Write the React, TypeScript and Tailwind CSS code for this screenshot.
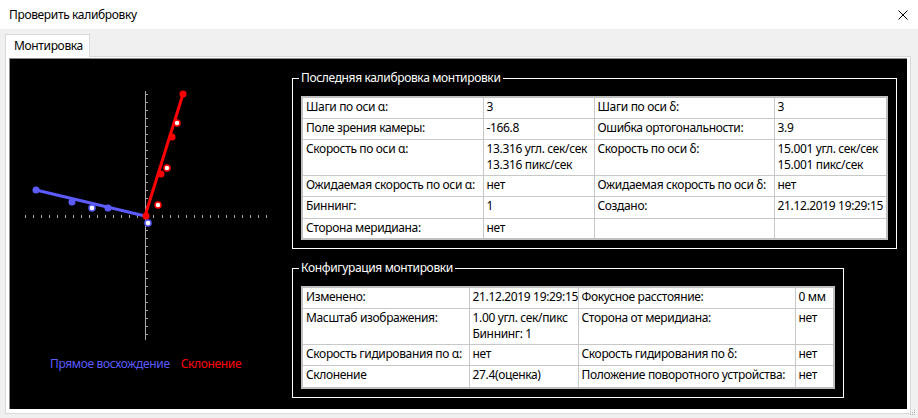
import React from "react"

const calib = [
  { h: "h-[21px]", a: "Шаги по оси α:", av: ["3"], b: "Шаги по оси δ:", bv: ["3"] },
  { h: "h-[21px]", a: "Поле зрения камеры:", av: ["-166.8"], b: "Ошибка ортогональности:", bv: ["3.9"] },
  {
    h: "h-[36px]",
    a: "Скорость по оси α:",
    av: ["13.316 угл. сек/сек", "13.316 пикс/сек"],
    b: "Скорость по оси δ:",
    bv: ["15.001 угл. сек/сек", "15.001 пикс/сек"],
  },
  { h: "h-[21px]", a: "Ожидаемая скорость по оси α:", av: ["нет"], b: "Ожидаемая скорость по оси δ:", bv: ["нет"] },
  { h: "h-[22px]", a: "Биннинг:", av: ["1"], b: "Создано:", bv: ["21.12.2019 19:29:15"] },
  { h: "h-[21px]", a: "Сторона меридиана:", av: ["нет"], b: "", bv: [""] },
]

const config = [
  { h: "h-[21px]", a: "Изменено:", av: ["21.12.2019 19:29:15"], b: "Фокусное расстояние:", bv: ["0 мм"] },
  {
    h: "h-[36px]",
    a: "Масштаб изображения:",
    av: ["1.00 угл. сек/пикс", "Биннинг: 1"],
    b: "Сторона от меридиана:",
    bv: ["нет"],
  },
  { h: "h-[21px]", a: "Скорость гидирования по α:", av: ["нет"], b: "Скорость гидирования по δ:", bv: ["нет"] },
  { h: "h-[23px]", a: "Склонение", av: ["27.4(оценка)"], b: "Положение поворотного устройства:", bv: ["нет"] },
]

type Row = { h: string; a: string; av: string[]; b: string; bv: string[] }

function Cell({ lines }: { lines: string[] }) {
  return (
    <td className="border border-[#c8c8c8] align-top px-[3px] pt-[1px] leading-[16px] whitespace-nowrap overflow-hidden">
      {lines.map((l, i) => (
        <div key={i}>{l}</div>
      ))}
    </td>
  )
}

function InfoTable({ rows, cols, width }: { rows: Row[]; cols: string[]; width: string }) {
  return (
    <table className={`table-fixed border-collapse border-2 border-[#c0c0c0] bg-white text-black ${width}`}>
      <colgroup>
        {cols.map((c, i) => (
          <col key={i} className={c} />
        ))}
      </colgroup>
      <tbody>
        {rows.map((r, i) => (
          <tr key={i} className={r.h}>
            <Cell lines={[r.a]} />
            <Cell lines={r.av} />
            <Cell lines={[r.b]} />
            <Cell lines={r.bv} />
          </tr>
        ))}
      </tbody>
    </table>
  )
}

function Chart() {
  const vTicks = Array.from({ length: 31 }, (_, i) => 94 + i * 8)
  const hTicks = Array.from({ length: 31 }, (_, i) => 25 + i * 8.03)
  const blue = "#5b5bff"
  const red = "#ff0000"
  return (
    <svg width="282" height="297" viewBox="10 59 282 297" className="block">
      <line x1="145.5" y1="91" x2="145.5" y2="340" stroke="#a8a8a8" strokeWidth="1" />
      {vTicks.map((y) => (
        <line key={y} x1="146" y1={y + 0.5} x2="148" y2={y + 0.5} stroke="#a8a8a8" strokeWidth="1" />
      ))}
      {hTicks.map((x) => (
        <line key={x} x1={Math.round(x) + 0.5} y1="215" x2={Math.round(x) + 0.5} y2="218" stroke="#a8a8a8" strokeWidth="1" />
      ))}

      <line x1="36" y1="190" x2="145" y2="216" stroke={blue} strokeWidth="3" />
      {[
        [36, 190],
        [72, 202],
        [108, 208],
      ].map(([x, y]) => (
        <circle key={x} cx={x} cy={y} r="3.5" fill={blue} />
      ))}
      {[
        [92, 208],
        [148, 223],
      ].map(([x, y]) => (
        <circle key={x} cx={x} cy={y} r="3" fill="#fff" stroke={blue} strokeWidth="1.5" />
      ))}

      <line x1="145" y1="216" x2="183" y2="94" stroke={red} strokeWidth="3" />
      {[
        [183, 94],
        [172, 137],
        [161, 174],
        [146, 216],
      ].map(([x, y]) => (
        <circle key={x} cx={x} cy={y} r="3.5" fill={red} />
      ))}
      {[
        [177, 123],
        [167, 168],
        [158, 205],
      ].map(([x, y]) => (
        <circle key={x} cx={x} cy={y} r="3" fill="#fff" stroke={red} strokeWidth="1.5" />
      ))}
    </svg>
  )
}

export default function App() {
  return (
    <div className="w-[918px] h-[418px] bg-[#f0f0f0] flex flex-col font-['Noto_Sans',sans-serif] text-[12px] tracking-[-0.35px] overflow-hidden">
      <div className="h-[29px] shrink-0 bg-white flex items-center justify-between pl-[9px] pr-[10px] text-black">
        <span>Проверить калибровку</span>
        <svg width="10" height="10" viewBox="0 0 10 10">
          <path d="M0.5 0.5 L9.5 9.5 M9.5 0.5 L0.5 9.5" stroke="#000" strokeWidth="1" />
        </svg>
      </div>

      <div className="flex flex-col pl-[5px] pt-[5px]">
        <div className="flex">
          <div className="relative z-10 h-[23px] w-[85px] -mb-px bg-white border border-b-0 border-[#d9d9d9] pl-[8px] flex items-center text-black">
            Монтировка
          </div>
        </div>
        <div className="w-[906px] h-[358px] bg-white border border-[#d9d9d9] pl-[3px] pr-[3px] pt-[1px] pb-[4px]">
          <div className="h-full bg-black border-l border-t border-[#8a8a8a] flex">
            <div className="w-[282px] shrink-0 flex flex-col">
              <Chart />
              <div className="flex pl-[40px] gap-[11px] leading-[16px]">
                <span className="text-[#5b5bff]">Прямое восхождение</span>
                <span className="text-[#ff0000]">Склонение</span>
              </div>
            </div>

            <div className="flex flex-col">
              <fieldset className="mt-[11px] w-[605px] border border-white pl-[8px] pt-[10px] pb-[8px]">
                <legend className="text-white leading-[16px] px-[2px] -ml-[2px]">Последняя калибровка монтировки</legend>
                <InfoTable
                  rows={calib}
                  width="w-[585px]"
                  cols={["w-[181px]", "w-[111px]", "w-[180px]", "w-[113px]"]}
                />
              </fieldset>
              <fieldset className="mt-[11px] w-[552px] border border-white pl-[8px] pt-[10px] pb-[8px]">
                <legend className="text-white leading-[16px] px-[2px] -ml-[2px]">Конфигурация монтировки</legend>
                <InfoTable
                  rows={config}
                  width="w-[532px]"
                  cols={["w-[167px]", "w-[109px]", "w-[217px]", "w-[39px]"]}
                />
              </fieldset>
            </div>
          </div>
        </div>
      </div>

      <div className="flex justify-end pr-[2px] -mt-[4px]">
        <svg width="6" height="6" viewBox="0 0 6 6">
          <rect x="4" y="0" width="1" height="1" fill="#b0b0b0" />
          <rect x="2" y="2" width="1" height="1" fill="#b0b0b0" />
          <rect x="4" y="2" width="1" height="1" fill="#b0b0b0" />
          <rect x="0" y="4" width="1" height="1" fill="#b0b0b0" />
          <rect x="2" y="4" width="1" height="1" fill="#b0b0b0" />
          <rect x="4" y="4" width="1" height="1" fill="#b0b0b0" />
        </svg>
      </div>
    </div>
  )
}
